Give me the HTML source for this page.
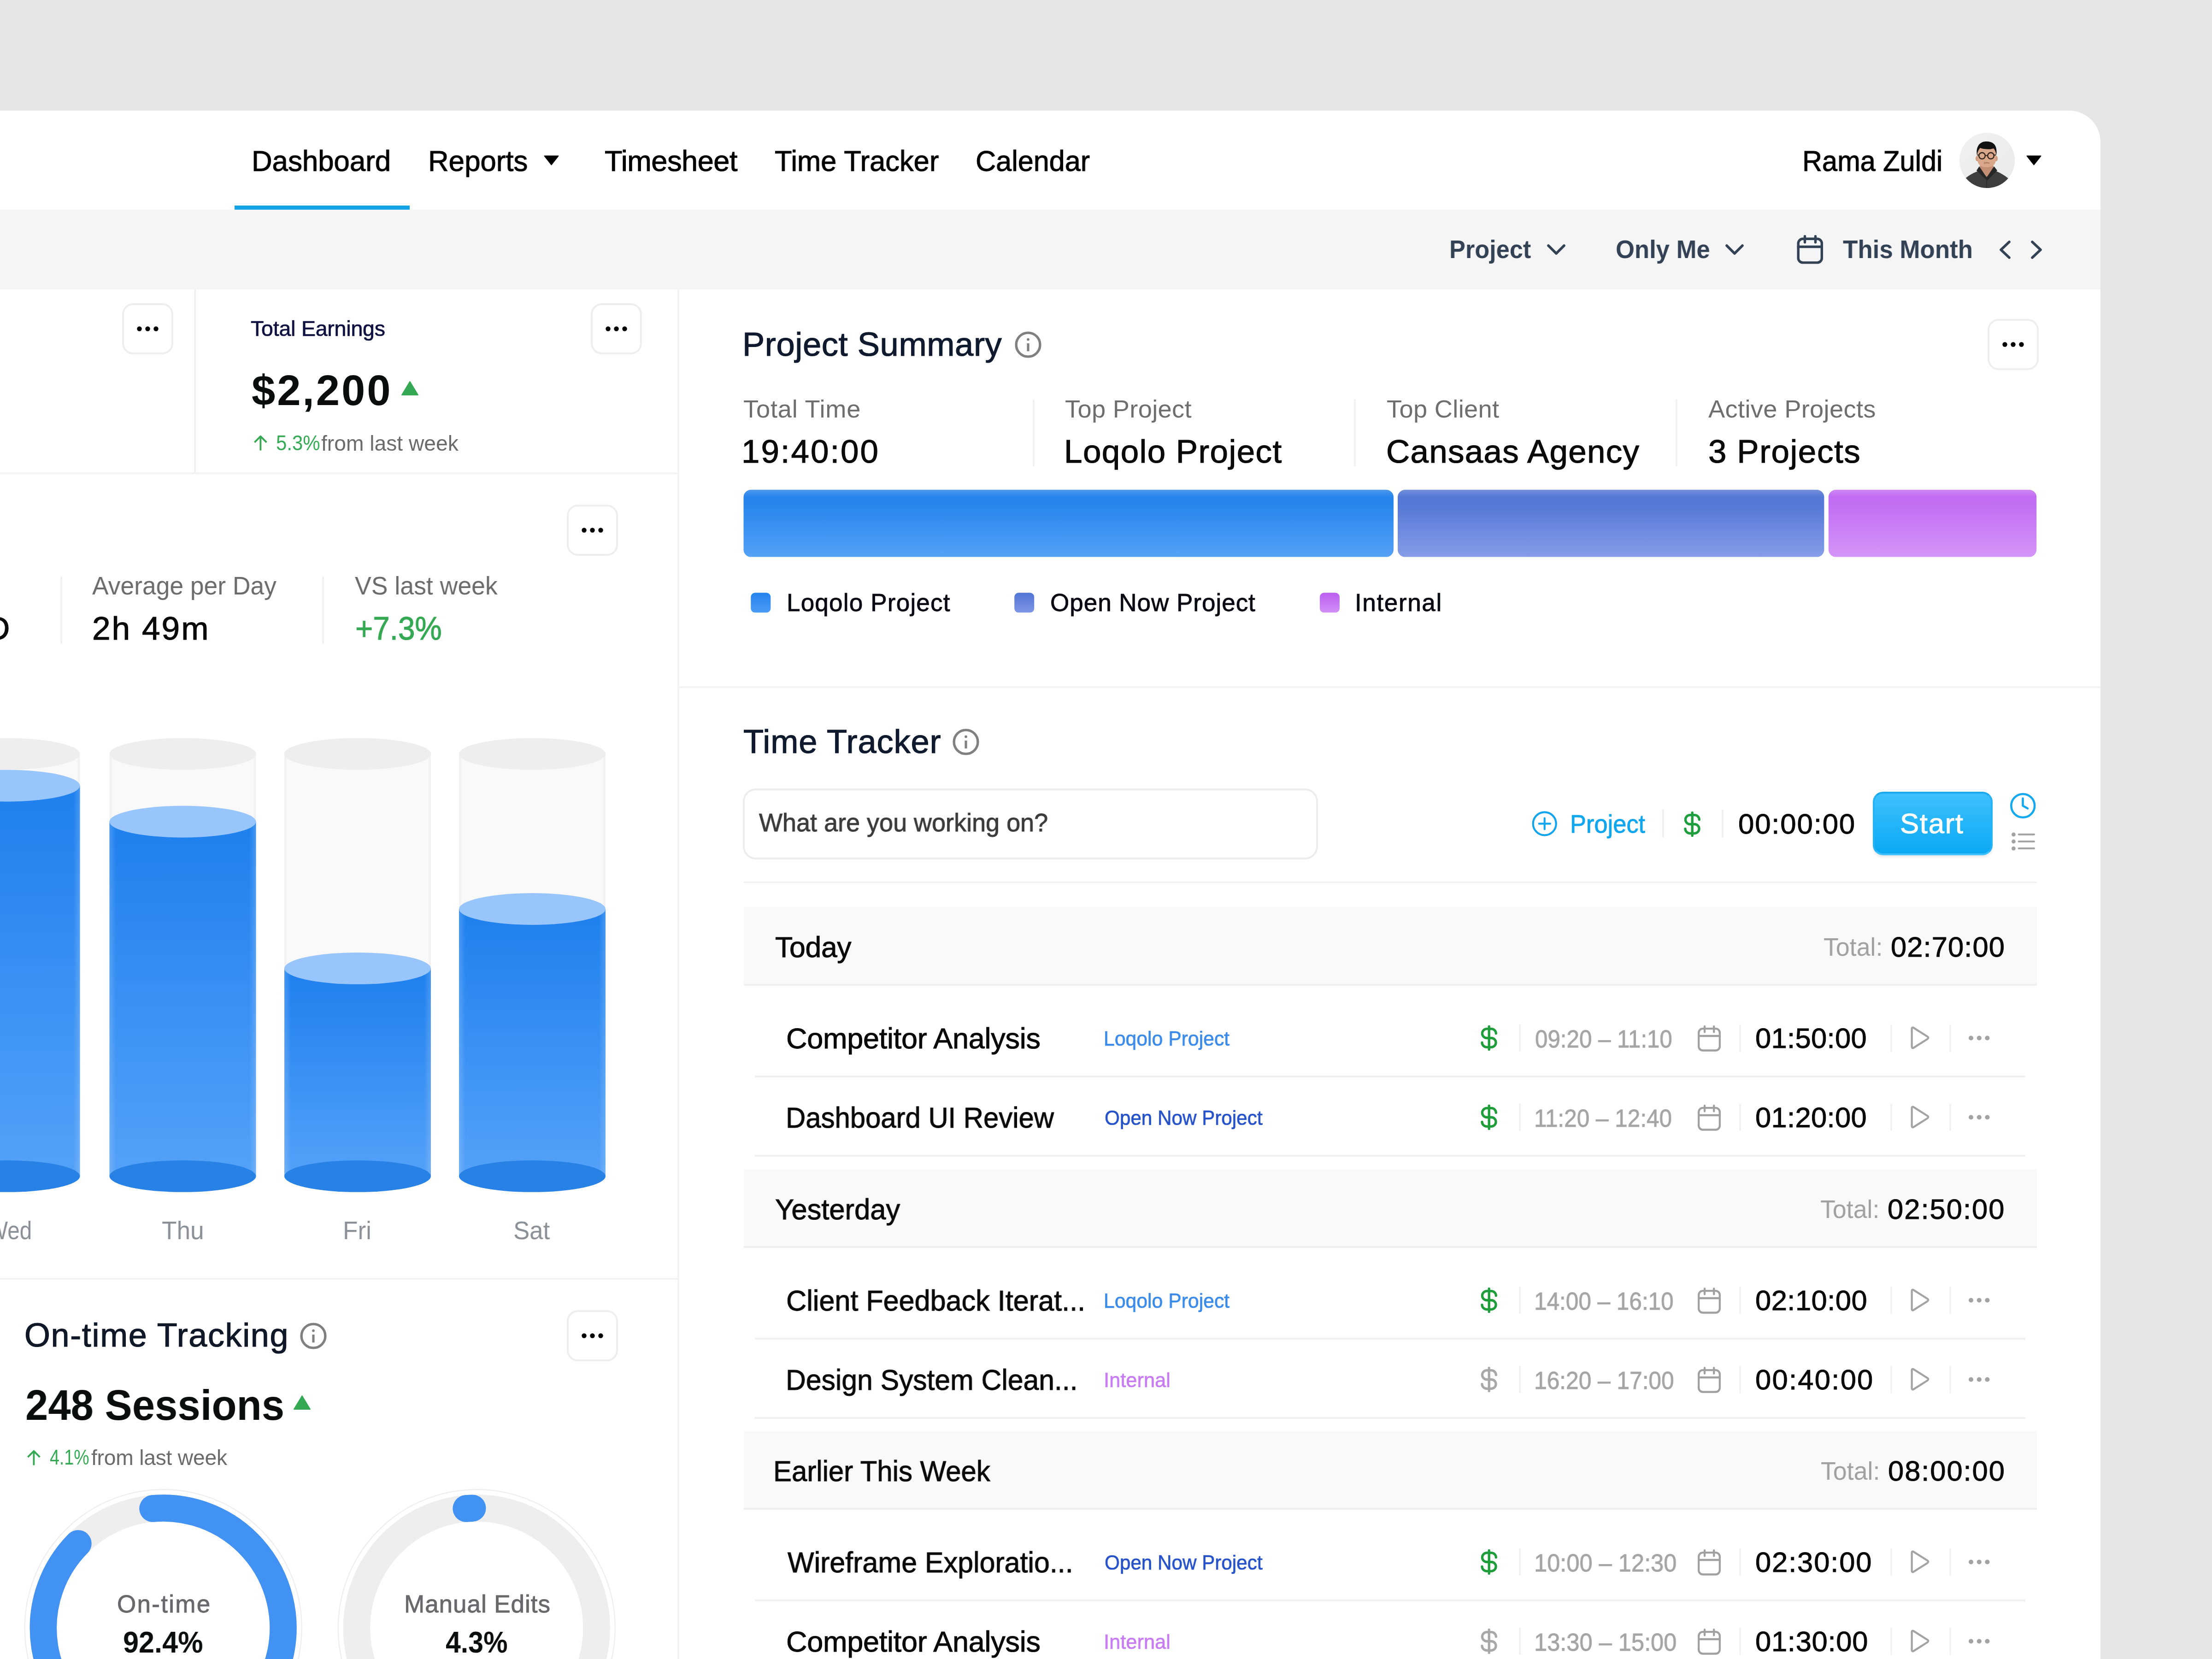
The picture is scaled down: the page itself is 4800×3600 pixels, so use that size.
<!DOCTYPE html><html><head><meta charset="utf-8"><style>
html,body{margin:0;padding:0}
body{width:4800px;height:3600px;background:#e6e6e6;overflow:hidden;position:relative;font-family:"Liberation Sans",sans-serif}
body>div{position:absolute}
.t{position:absolute;line-height:0;white-space:pre;will-change:transform}
</style></head><body>
<div style="left:-100px;top:240px;width:4657.5px;height:3360px;background:#fff;border-top-right-radius:68px"></div>
<div style="left:0.0px;top:455.0px;width:4557.5px;height:173.0px;background:#f5f5f5;"></div>
<div style="left:508.6px;top:446.0px;width:380.2px;height:9.0px;background:#14a3e6;"></div>
<div style="left:421.0px;top:628.0px;width:4.0px;height:397.0px;background:#f2f2f2;"></div>
<div style="left:0.0px;top:1025.0px;width:1470.0px;height:4.0px;background:#f3f3f3;"></div>
<div style="left:1470.0px;top:628.0px;width:4.0px;height:2972.0px;background:#f3f3f3;"></div>
<div style="left:0.0px;top:2773.0px;width:1470.0px;height:4.0px;background:#f3f3f3;"></div>
<div style="left:1474.0px;top:1489.0px;width:3083.5px;height:4.0px;background:#f3f3f3;"></div>
<div class="t" style="left:546.4px;top:348.5px;font-size:63.08px;font-weight:normal;color:#000;letter-spacing:0.00px;transform:scaleX(0.9789);transform-origin:0 0;will-change:transform;-webkit-text-stroke:1.01px #000;">Dashboard</div>
<div class="t" style="left:928.5px;top:348.5px;font-size:63.08px;font-weight:normal;color:#000;letter-spacing:0.00px;transform:scaleX(0.9797);transform-origin:0 0;will-change:transform;-webkit-text-stroke:1.01px #000;">Reports</div>
<svg style="position:absolute;left:1180.0px;top:337.0px;overflow:visible;" width="33" height="22" viewBox="0 0 33 22"><path d="M1.5 1.5 L31.5 1.5 L16.5 20.5 Z" fill="#000" stroke="#000" stroke-width="2" stroke-linejoin="round"/></svg>
<div class="t" style="left:1312.1px;top:348.5px;font-size:63.08px;font-weight:normal;color:#000;letter-spacing:-0.46px;-webkit-text-stroke:1.01px #000;">Timesheet</div>
<div class="t" style="left:1680.6px;top:348.5px;font-size:63.08px;font-weight:normal;color:#000;letter-spacing:0.00px;transform:scaleX(0.9743);transform-origin:0 0;will-change:transform;-webkit-text-stroke:1.01px #000;">Time Tracker</div>
<div class="t" style="left:2116.9px;top:348.5px;font-size:63.08px;font-weight:normal;color:#000;letter-spacing:0.00px;transform:scaleX(0.9688);transform-origin:0 0;will-change:transform;-webkit-text-stroke:1.01px #000;">Calendar</div>
<div class="t" style="left:3911.2px;top:348.5px;font-size:63.08px;font-weight:normal;color:#000;letter-spacing:0.00px;transform:scaleX(0.9430);transform-origin:0 0;will-change:transform;-webkit-text-stroke:1.01px #000;">Rama Zuldi</div>
<svg style="position:absolute;left:4397.0px;top:337.0px;overflow:visible;" width="33" height="22" viewBox="0 0 33 22"><path d="M1.5 1.5 L31.5 1.5 L16.5 20.5 Z" fill="#000" stroke="#000" stroke-width="2" stroke-linejoin="round"/></svg>
<svg style="position:absolute;left:4252.0px;top:288.0px;overflow:visible;" width="120" height="120" viewBox="0 0 120 120">
<defs><clipPath id="avc"><circle cx="60" cy="60" r="60"/></clipPath>
<linearGradient id="avbg" x1="0" y1="0" x2="1" y2="1"><stop offset="0" stop-color="#f0f1f0"/><stop offset="1" stop-color="#e7ebea"/></linearGradient></defs>
<g clip-path="url(#avc)">
<rect width="120" height="120" fill="url(#avbg)"/>
<path d="M2 112 C10 98 26 88 44 82 L76 82 C92 88 108 98 118 112 L120 125 L0 125 Z" fill="#3c3f3d"/>
<path d="M45 62 L73 62 L74 80 L59 96 L44 80 Z" fill="#c48e74"/>
<path d="M43 73 L59 97 L75 73 L82 82 L60 104 L37 82 Z" fill="#252826"/>
<path d="M59 100 L59 125" stroke="#2a2c2b" stroke-width="1.5"/>
<ellipse cx="38.5" cy="56" rx="3.5" ry="6" fill="#cf9a7e"/>
<ellipse cx="79.5" cy="56" rx="3.5" ry="6" fill="#cf9a7e"/>
<path d="M39 46 C39 34 47 29 59 29 C71 29 79 34 79 46 L79 58 C79 70 70 75 59 75 C48 75 39 70 39 58 Z" fill="#d9a78a"/>
<path d="M38 50 C35 30 44 19 58 19 C74 19 83 27 80 50 C79 42 77 37 74 34 C66 37 52 36 45 33 C41 37 39 43 38 50 Z" fill="#121212"/>
<circle cx="49" cy="50" r="6.8" fill="none" stroke="#32251d" stroke-width="2.4"/>
<circle cx="68" cy="50" r="6.8" fill="none" stroke="#32251d" stroke-width="2.4"/>
<path d="M55.8 49.5 L61.2 49.5 M42.2 49 L39 48 M74.8 49 L79 48" stroke="#32251d" stroke-width="2"/>
<path d="M53 66 Q59 64.5 65 66" stroke="#a86f5a" stroke-width="2" fill="none"/>
</g></svg>
<div class="t" style="left:3144.8px;top:542.3px;font-size:54.65px;font-weight:bold;color:#334155;letter-spacing:0.00px;transform:scaleX(0.9569);transform-origin:0 0;will-change:transform;">Project</div>
<div class="t" style="left:3506.2px;top:542.3px;font-size:54.65px;font-weight:bold;color:#334155;letter-spacing:0.00px;transform:scaleX(0.9626);transform-origin:0 0;will-change:transform;">Only Me</div>
<div class="t" style="left:3998.7px;top:542.3px;font-size:54.65px;font-weight:bold;color:#334155;letter-spacing:0.00px;transform:scaleX(0.9677);transform-origin:0 0;will-change:transform;">This Month</div>
<svg style="position:absolute;left:3357.0px;top:530.0px;overflow:visible;" width="40" height="23" viewBox="0 0 40 23"><path d="M3 3 L20 20 L37 3" fill="none" stroke="#334155" stroke-width="5.6" stroke-linecap="round" stroke-linejoin="round"/></svg>
<svg style="position:absolute;left:3744.0px;top:530.0px;overflow:visible;" width="40" height="23" viewBox="0 0 40 23"><path d="M3 3 L20 20 L37 3" fill="none" stroke="#334155" stroke-width="5.6" stroke-linecap="round" stroke-linejoin="round"/></svg>
<svg style="position:absolute;left:3899.0px;top:510.0px;overflow:visible;" width="58" height="63" viewBox="0 0 58 63"><rect x="3.2" y="8.3" width="51.1" height="51.6" rx="10" fill="none" stroke="#334155" stroke-width="5.4"/><path d="M17.5 2.7 V15.8 M40.5 2.7 V15.8 M3.2 25.5 H54.3" stroke="#334155" stroke-width="5.4" stroke-linecap="round"/></svg>
<svg style="position:absolute;left:4339.0px;top:522.0px;overflow:visible;" width="24" height="40" viewBox="0 0 24 40"><path d="M21 3 L3 20 L21 37" fill="none" stroke="#334155" stroke-width="5.6" stroke-linecap="round" stroke-linejoin="round"/></svg>
<svg style="position:absolute;left:4407.0px;top:522.0px;overflow:visible;" width="24" height="40" viewBox="0 0 24 40"><path d="M3 3 L21 20 L3 37" fill="none" stroke="#334155" stroke-width="5.6" stroke-linecap="round" stroke-linejoin="round"/></svg>
<div style="left:265.0px;top:658.0px;width:111px;height:111px;box-sizing:border-box;border:4px solid #eeeeee;border-radius:24px;background:#fff"></div>
<svg style="position:absolute;left:265.0px;top:658.0px;overflow:visible;" width="111" height="111" viewBox="0 0 111 111"><circle cx="37.5" cy="55.5" r="5.2" fill="#000"/><circle cx="55.5" cy="55.5" r="5.2" fill="#000"/><circle cx="73.5" cy="55.5" r="5.2" fill="#000"/></svg>
<div style="left:1282.0px;top:658.0px;width:111px;height:111px;box-sizing:border-box;border:4px solid #eeeeee;border-radius:24px;background:#fff"></div>
<svg style="position:absolute;left:1282.0px;top:658.0px;overflow:visible;" width="111" height="111" viewBox="0 0 111 111"><circle cx="37.5" cy="55.5" r="5.2" fill="#000"/><circle cx="55.5" cy="55.5" r="5.2" fill="#000"/><circle cx="73.5" cy="55.5" r="5.2" fill="#000"/></svg>
<div class="t" style="left:544.3px;top:713.1px;font-size:46.51px;font-weight:normal;color:#0f1140;letter-spacing:-0.21px;-webkit-text-stroke:0.74px #0f1140;">Total Earnings</div>
<div class="t" style="left:545.5px;top:847.3px;font-size:92.30px;font-weight:bold;color:#0a0f0d;letter-spacing:3.85px;">$2,200</div>
<svg style="position:absolute;left:870.0px;top:826.0px;overflow:visible;" width="39" height="33" viewBox="0 0 39 33"><path d="M19.5 2 L37 31 L2 31 Z" fill="#34a853" stroke="#34a853" stroke-width="2" stroke-linejoin="round"/></svg>
<svg style="position:absolute;left:549.0px;top:943.8px;overflow:visible;" width="32" height="36" viewBox="0 0 32 36"><path d="M16.4 33.5 V4 M3.4 15.8 L16.4 2.8 L29.4 15.8" fill="none" stroke="#34a853" stroke-width="3.8" stroke-linecap="butt" stroke-linejoin="round"/></svg>
<div class="t" style="left:598.8px;top:961.9px;font-size:45.35px;font-weight:normal;color:#34a853;letter-spacing:0.00px;transform:scaleX(0.9251);transform-origin:0 0;will-change:transform;">5.3%</div>
<div class="t" style="left:696.8px;top:961.6px;font-size:46.22px;font-weight:normal;color:#6b6b6b;letter-spacing:-0.01px;">from last week</div>
<div style="left:1229.5px;top:1094.5px;width:111px;height:111px;box-sizing:border-box;border:4px solid #eeeeee;border-radius:24px;background:#fff"></div>
<svg style="position:absolute;left:1229.5px;top:1094.5px;overflow:visible;" width="111" height="111" viewBox="0 0 111 111"><circle cx="37.5" cy="55.5" r="5.2" fill="#000"/><circle cx="55.5" cy="55.5" r="5.2" fill="#000"/><circle cx="73.5" cy="55.5" r="5.2" fill="#000"/></svg>
<div style="left:131.0px;top:1251.0px;width:4.0px;height:146.0px;background:#f2f2f2;"></div>
<div style="left:699.0px;top:1251.0px;width:4.0px;height:146.0px;background:#f2f2f2;"></div>
<div class="t" style="left:-29.9px;top:1363.8px;font-size:71.22px;font-weight:normal;color:#0a0a0a;letter-spacing:0.00px;-webkit-text-stroke:1.14px #0a0a0a;">D</div>
<div class="t" style="left:200.3px;top:1271.0px;font-size:54.80px;font-weight:normal;color:#6b6b6b;letter-spacing:0.00px;transform:scaleX(0.9749);transform-origin:0 0;will-change:transform;">Average per Day</div>
<div class="t" style="left:200.1px;top:1363.8px;font-size:71.22px;font-weight:normal;color:#0a0a0a;letter-spacing:2.99px;-webkit-text-stroke:1.14px #0a0a0a;">2h 49m</div>
<div class="t" style="left:769.7px;top:1271.0px;font-size:54.80px;font-weight:normal;color:#6b6b6b;letter-spacing:0.00px;transform:scaleX(0.9780);transform-origin:0 0;will-change:transform;">VS last week</div>
<div class="t" style="left:771.2px;top:1363.8px;font-size:71.22px;font-weight:normal;color:#34a853;letter-spacing:0.00px;transform:scaleX(0.9204);transform-origin:0 0;will-change:transform;-webkit-text-stroke:1.14px #34a853;">+7.3%</div>
<svg style="position:absolute;left:0.0px;top:0.0px;overflow:visible;" width="1470" height="2700" viewBox="0 0 1470 2700"><defs>
<linearGradient id="fillg" x1="0" y1="0" x2="0" y2="1"><stop offset="0" stop-color="#1e80ee"/><stop offset="1" stop-color="#54a1f8"/></linearGradient>
<linearGradient id="sideg" x1="0" y1="0" x2="1" y2="0"><stop offset="0" stop-color="#ffffff" stop-opacity="0.17"/><stop offset="0.045" stop-color="#ffffff" stop-opacity="0"/><stop offset="0.955" stop-color="#ffffff" stop-opacity="0"/><stop offset="1" stop-color="#ffffff" stop-opacity="0.17"/></linearGradient>
<linearGradient id="bgside" x1="0" y1="0" x2="1" y2="0"><stop offset="0" stop-color="#f2f2f2"/><stop offset="0.012" stop-color="#f2f2f2"/><stop offset="0.02" stop-color="#f9f9f9"/><stop offset="0.98" stop-color="#f9f9f9"/><stop offset="0.988" stop-color="#f2f2f2"/><stop offset="1" stop-color="#f2f2f2"/></linearGradient>
</defs><rect x="-144.5" y="1636" width="318" height="916.4000000000001" fill="url(#bgside)"/><ellipse cx="14.5" cy="1636" rx="159" ry="34.4" fill="#eeeeee"/><rect x="-144.5" y="1705" width="318" height="847.4000000000001" fill="url(#fillg)"/><rect x="-144.5" y="1705" width="318" height="847.4000000000001" fill="url(#sideg)"/><ellipse cx="14.5" cy="2552.4" rx="159" ry="34.4" fill="#2882e6"/><ellipse cx="14.5" cy="1705" rx="159" ry="34.4" fill="#98c5fb"/><rect x="237.5" y="1636" width="318" height="916.4000000000001" fill="url(#bgside)"/><ellipse cx="396.5" cy="1636" rx="159" ry="34.4" fill="#eeeeee"/><rect x="237.5" y="1783" width="318" height="769.4000000000001" fill="url(#fillg)"/><rect x="237.5" y="1783" width="318" height="769.4000000000001" fill="url(#sideg)"/><ellipse cx="396.5" cy="2552.4" rx="159" ry="34.4" fill="#2882e6"/><ellipse cx="396.5" cy="1783" rx="159" ry="34.4" fill="#98c5fb"/><rect x="617" y="1636" width="318" height="916.4000000000001" fill="url(#bgside)"/><ellipse cx="776" cy="1636" rx="159" ry="34.4" fill="#eeeeee"/><rect x="617" y="2101.4" width="318" height="451.0" fill="url(#fillg)"/><rect x="617" y="2101.4" width="318" height="451.0" fill="url(#sideg)"/><ellipse cx="776" cy="2552.4" rx="159" ry="34.4" fill="#2882e6"/><ellipse cx="776" cy="2101.4" rx="159" ry="34.4" fill="#98c5fb"/><rect x="996" y="1636" width="318" height="916.4000000000001" fill="url(#bgside)"/><ellipse cx="1155" cy="1636" rx="159" ry="34.4" fill="#eeeeee"/><rect x="996" y="1972.5" width="318" height="579.9000000000001" fill="url(#fillg)"/><rect x="996" y="1972.5" width="318" height="579.9000000000001" fill="url(#sideg)"/><ellipse cx="1155" cy="2552.4" rx="159" ry="34.4" fill="#2882e6"/><ellipse cx="1155" cy="1972.5" rx="159" ry="34.4" fill="#98c5fb"/></svg>
<div class="t" style="left:-27.8px;top:2669.8px;font-size:56.40px;font-weight:normal;color:#8b9096;letter-spacing:0.00px;transform:scaleX(0.8457);transform-origin:0 0;will-change:transform;">Wed</div>
<div class="t" style="left:351.4px;top:2669.8px;font-size:56.40px;font-weight:normal;color:#8b9096;letter-spacing:0.00px;transform:scaleX(0.9435);transform-origin:0 0;will-change:transform;">Thu</div>
<div class="t" style="left:743.6px;top:2669.8px;font-size:56.40px;font-weight:normal;color:#8b9096;letter-spacing:0.00px;transform:scaleX(0.9411);transform-origin:0 0;will-change:transform;">Fri</div>
<div class="t" style="left:1114.2px;top:2669.8px;font-size:56.40px;font-weight:normal;color:#8b9096;letter-spacing:0.00px;transform:scaleX(0.9359);transform-origin:0 0;will-change:transform;">Sat</div>
<div class="t" style="left:52.9px;top:2897.4px;font-size:71.95px;font-weight:normal;color:#101828;letter-spacing:1.65px;-webkit-text-stroke:1.15px #101828;">On-time Tracking</div>
<svg style="position:absolute;left:650.0px;top:2868.7px;overflow:visible;" width="60" height="60" viewBox="0 0 60 60"><circle cx="30" cy="30" r="25.9" fill="none" stroke="#808080" stroke-width="5.4"/><circle cx="30" cy="18.6" r="2.9" fill="#808080"/><rect x="27.4" y="27" width="5.2" height="17.2" fill="#808080"/></svg>
<div style="left:1229.5px;top:2842.5px;width:111px;height:111px;box-sizing:border-box;border:4px solid #eeeeee;border-radius:24px;background:#fff"></div>
<svg style="position:absolute;left:1229.5px;top:2842.5px;overflow:visible;" width="111" height="111" viewBox="0 0 111 111"><circle cx="37.5" cy="55.5" r="5.2" fill="#000"/><circle cx="55.5" cy="55.5" r="5.2" fill="#000"/><circle cx="73.5" cy="55.5" r="5.2" fill="#000"/></svg>
<div class="t" style="left:54.5px;top:3048.8px;font-size:92.01px;font-weight:bold;color:#0a0f0d;letter-spacing:0.00px;transform:scaleX(0.9639);transform-origin:0 0;will-change:transform;">248 Sessions</div>
<svg style="position:absolute;left:636.0px;top:3027.0px;overflow:visible;" width="39" height="33" viewBox="0 0 39 33"><path d="M19.5 2 L37 31 L2 31 Z" fill="#34a853" stroke="#34a853" stroke-width="2" stroke-linejoin="round"/></svg>
<svg style="position:absolute;left:56.6px;top:3145.5px;overflow:visible;" width="32" height="36" viewBox="0 0 32 36"><path d="M16.4 33.5 V4 M3.4 15.8 L16.4 2.8 L29.4 15.8" fill="none" stroke="#34a853" stroke-width="3.8" stroke-linecap="butt" stroke-linejoin="round"/></svg>
<div class="t" style="left:107.7px;top:3163.3px;font-size:45.35px;font-weight:normal;color:#34a853;letter-spacing:0.00px;transform:scaleX(0.8285);transform-origin:0 0;will-change:transform;">4.1%</div>
<div class="t" style="left:197.8px;top:3163.0px;font-size:46.22px;font-weight:normal;color:#6b6b6b;letter-spacing:-0.22px;">from last week</div>
<svg style="position:absolute;left:0.0px;top:0.0px;overflow:visible;" width="1470" height="3600" viewBox="0 0 1470 3600"><circle cx="354.2" cy="3532.8" r="300.5" fill="none" stroke="#efefef" stroke-width="2.5"/><circle cx="354.2" cy="3532.8" r="260.3" fill="none" stroke="#eeeeee" stroke-width="58.5"/><path d="M331.51 3273.49 A260.3 260.3 0 1 1 169.50 3349.38" fill="none" stroke="#4192f3" stroke-width="58.5" stroke-linecap="round"/></svg>
<svg style="position:absolute;left:0.0px;top:0.0px;overflow:visible;" width="1470" height="3600" viewBox="0 0 1470 3600"><circle cx="1034.3" cy="3532.8" r="300.5" fill="none" stroke="#efefef" stroke-width="2.5"/><circle cx="1034.3" cy="3532.8" r="260.3" fill="none" stroke="#eeeeee" stroke-width="58.5"/><path d="M1011.61 3273.49 A260.3 260.3 0 0 1 1025.22 3272.66" fill="none" stroke="#4192f3" stroke-width="58.5" stroke-linecap="round"/></svg>
<div class="t" style="left:254.3px;top:3480.8px;font-size:53.05px;font-weight:normal;color:#69696d;letter-spacing:2.28px;-webkit-text-stroke:0.85px #69696d;">On-time</div>
<div class="t" style="left:266.6px;top:3563.7px;font-size:63.95px;font-weight:bold;color:#0a0f0d;letter-spacing:0.00px;transform:scaleX(0.9568);transform-origin:0 0;will-change:transform;">92.4%</div>
<div class="t" style="left:876.8px;top:3480.8px;font-size:53.05px;font-weight:normal;color:#69696d;letter-spacing:0.94px;-webkit-text-stroke:0.85px #69696d;">Manual Edits</div>
<div class="t" style="left:967.1px;top:3563.7px;font-size:63.95px;font-weight:bold;color:#0a0f0d;letter-spacing:0.00px;transform:scaleX(0.9225);transform-origin:0 0;will-change:transform;">4.3%</div>
<div class="t" style="left:1611.0px;top:746.9px;font-size:72.38px;font-weight:normal;color:#0f1a2e;letter-spacing:0.56px;-webkit-text-stroke:1.16px #0f1a2e;">Project Summary</div>
<svg style="position:absolute;left:2200.5px;top:718.2px;overflow:visible;" width="60" height="60" viewBox="0 0 60 60"><circle cx="30" cy="30" r="25.9" fill="none" stroke="#808080" stroke-width="5.4"/><circle cx="30" cy="18.6" r="2.9" fill="#808080"/><rect x="27.4" y="27" width="5.2" height="17.2" fill="#808080"/></svg>
<div style="left:4312.5px;top:692.0px;width:111px;height:111px;box-sizing:border-box;border:4px solid #eeeeee;border-radius:24px;background:#fff"></div>
<svg style="position:absolute;left:4312.5px;top:692.0px;overflow:visible;" width="111" height="111" viewBox="0 0 111 111"><circle cx="37.5" cy="55.5" r="5.2" fill="#000"/><circle cx="55.5" cy="55.5" r="5.2" fill="#000"/><circle cx="73.5" cy="55.5" r="5.2" fill="#000"/></svg>
<div class="t" style="left:1612.5px;top:887.2px;font-size:54.22px;font-weight:normal;color:#6e6e6e;letter-spacing:0.82px;">Total Time</div>
<div class="t" style="left:1608.7px;top:979.7px;font-size:70.93px;font-weight:normal;color:#0a0a0a;letter-spacing:2.98px;-webkit-text-stroke:1.13px #0a0a0a;">19:40:00</div>
<div class="t" style="left:2310.8px;top:887.2px;font-size:54.22px;font-weight:normal;color:#6e6e6e;letter-spacing:0.34px;">Top Project</div>
<div class="t" style="left:2309.1px;top:979.7px;font-size:70.93px;font-weight:normal;color:#0a0a0a;letter-spacing:1.44px;-webkit-text-stroke:1.13px #0a0a0a;">Loqolo Project</div>
<div class="t" style="left:3008.8px;top:887.2px;font-size:54.22px;font-weight:normal;color:#6e6e6e;letter-spacing:0.34px;">Top Client</div>
<div class="t" style="left:3007.5px;top:979.7px;font-size:70.93px;font-weight:normal;color:#0a0a0a;letter-spacing:1.28px;-webkit-text-stroke:1.13px #0a0a0a;">Cansaas Agency</div>
<div class="t" style="left:3706.6px;top:887.2px;font-size:54.22px;font-weight:normal;color:#6e6e6e;letter-spacing:0.35px;">Active Projects</div>
<div class="t" style="left:3706.6px;top:979.7px;font-size:70.93px;font-weight:normal;color:#0a0a0a;letter-spacing:1.60px;-webkit-text-stroke:1.13px #0a0a0a;">3 Projects</div>
<div style="left:2240.5px;top:867.0px;width:4.0px;height:145.0px;background:#f2f2f2;"></div>
<div style="left:2937.5px;top:867.0px;width:4.0px;height:145.0px;background:#f2f2f2;"></div>
<div style="left:3636.0px;top:867.0px;width:4.0px;height:145.0px;background:#f2f2f2;"></div>
<svg style="position:absolute;left:0.0px;top:0.0px;overflow:visible;" width="4600" height="1300" viewBox="0 0 4600 1300"><defs>
<linearGradient id="b1" x1="0" y1="0" x2="0" y2="1"><stop offset="0" stop-color="#4e98ec"/><stop offset="0.1" stop-color="#2886ec"/><stop offset="0.22" stop-color="#2786ec"/><stop offset="1" stop-color="#55a1f7"/></linearGradient>
<linearGradient id="b2" x1="0" y1="0" x2="0" y2="1"><stop offset="0" stop-color="#7490da"/><stop offset="0.1" stop-color="#5679d6"/><stop offset="0.22" stop-color="#5478d6"/><stop offset="1" stop-color="#869de8"/></linearGradient>
<linearGradient id="b3" x1="0" y1="0" x2="0" y2="1"><stop offset="0" stop-color="#cf88f4"/><stop offset="0.1" stop-color="#c06cf2"/><stop offset="0.22" stop-color="#c06ef2"/><stop offset="1" stop-color="#d595f8"/></linearGradient>
</defs><rect x="1613.5" y="1062.7" width="1410.5" height="145.9" rx="16" fill="url(#b1)"/><rect x="3033" y="1062.7" width="925.4" height="145.9" rx="16" fill="url(#b2)"/><rect x="3967.8" y="1062.7" width="451.4" height="145.9" rx="16" fill="url(#b3)"/></svg>
<svg style="position:absolute;left:0.0px;top:0.0px;overflow:visible;" width="4600" height="1400" viewBox="0 0 4600 1400"><defs>
<linearGradient id="l1" x1="0" y1="0" x2="0" y2="1"><stop offset="0" stop-color="#2483ee"/><stop offset="1" stop-color="#4c9bf6"/></linearGradient>
<linearGradient id="l2" x1="0" y1="0" x2="0" y2="1"><stop offset="0" stop-color="#5174d4"/><stop offset="1" stop-color="#7f97e4"/></linearGradient>
<linearGradient id="l3" x1="0" y1="0" x2="0" y2="1"><stop offset="0" stop-color="#bb5ef0"/><stop offset="1" stop-color="#d18ff6"/></linearGradient>
</defs><rect x="1629.3" y="1286.3" width="43" height="43" rx="9" fill="url(#l1)"/><rect x="2201.2" y="1286.3" width="43" height="43" rx="9" fill="url(#l2)"/><rect x="2863.9" y="1286.3" width="43" height="43" rx="9" fill="url(#l3)"/></svg>
<div class="t" style="left:1706.6px;top:1307.5px;font-size:53.05px;font-weight:normal;color:#0a0a14;letter-spacing:1.18px;-webkit-text-stroke:0.85px #0a0a14;">Loqolo Project</div>
<div class="t" style="left:2278.5px;top:1307.5px;font-size:53.05px;font-weight:normal;color:#0a0a14;letter-spacing:0.96px;-webkit-text-stroke:0.85px #0a0a14;">Open Now Project</div>
<div class="t" style="left:2940.0px;top:1307.5px;font-size:53.05px;font-weight:normal;color:#0a0a14;letter-spacing:1.62px;-webkit-text-stroke:0.85px #0a0a14;">Internal</div>
<div class="t" style="left:1613.4px;top:1608.7px;font-size:72.24px;font-weight:normal;color:#0f1a2e;letter-spacing:0.90px;-webkit-text-stroke:1.16px #0f1a2e;">Time Tracker</div>
<svg style="position:absolute;left:2065.5px;top:1580.0px;overflow:visible;" width="60" height="60" viewBox="0 0 60 60"><circle cx="30" cy="30" r="25.9" fill="none" stroke="#808080" stroke-width="5.4"/><circle cx="30" cy="18.6" r="2.9" fill="#808080"/><rect x="27.4" y="27" width="5.2" height="17.2" fill="#808080"/></svg>
<div style="left:1612.3px;top:1710.5px;width:1247.5px;height:154px;box-sizing:border-box;border:4px solid #ececec;border-radius:28px;background:#fff"></div>
<div class="t" style="left:1647.1px;top:1785.1px;font-size:55.96px;font-weight:normal;color:#3b3b3b;letter-spacing:0.00px;transform:scaleX(0.9647);transform-origin:0 0;will-change:transform;-webkit-text-stroke:0.90px #3b3b3b;">What are you working on?</div>
<svg style="position:absolute;left:3324.0px;top:1760.0px;overflow:visible;" width="56" height="56" viewBox="0 0 56 56"><circle cx="27.7" cy="27.4" r="25" fill="none" stroke="#12a5ee" stroke-width="4.2"/><path d="M15.8 27.4 H39.9 M27.7 15.3 V39.3" stroke="#12a5ee" stroke-width="4.2" stroke-linecap="round"/></svg>
<div class="t" style="left:3407.3px;top:1787.9px;font-size:55.23px;font-weight:normal;color:#10a6ee;letter-spacing:0.00px;transform:scaleX(0.9488);transform-origin:0 0;will-change:transform;-webkit-text-stroke:0.88px #10a6ee;">Project</div>
<div style="left:3607.3px;top:1757.0px;width:4.0px;height:60.0px;background:#f0f0f0;"></div>
<svg style="position:absolute;left:3653.2px;top:1760.5px;overflow:visible;" width="38" height="55" viewBox="0 0 38 55"><path d="M34.3 17.6 A10 10 0 0 0 24.3 7.6 H14.3 A9.95 9.95 0 0 0 14.3 27.5 H24.1 A9.95 9.95 0 0 1 24.1 47.4 H14 A10 10 0 0 1 4 37.4 M19.2 2.4 V52.4" fill="none" stroke="#1e9e3e" stroke-width="5.3" stroke-linecap="round"/></svg>
<div style="left:3736.0px;top:1757.0px;width:4.0px;height:60.0px;background:#f0f0f0;"></div>
<div class="t" style="left:3771.9px;top:1787.9px;font-size:61.77px;font-weight:normal;color:#0a0a0a;letter-spacing:1.82px;-webkit-text-stroke:0.99px #0a0a0a;">00:00:00</div>
<div style="left:4063.8px;top:1718.2px;width:260.7px;height:137.4px;box-sizing:border-box;border:4px solid;border-color:#1aa9ee #26b2f6 #3fc0ff;border-radius:22px;background:linear-gradient(#3ec1ff,#0ba8f3);box-shadow:0 5px 4px rgba(0,0,0,0.07)"></div>
<div class="t" style="left:4123.4px;top:1787.2px;font-size:61.77px;font-weight:normal;color:#ffffff;letter-spacing:1.64px;-webkit-text-stroke:0.99px #ffffff;">Start</div>
<svg style="position:absolute;left:4360.0px;top:1719.0px;overflow:visible;" width="60" height="60" viewBox="0 0 60 60"><circle cx="29.7" cy="29.4" r="25.4" fill="none" stroke="#14a8ee" stroke-width="4.6"/><path d="M29.5 13.6 V29.4 L40 35.3" fill="none" stroke="#14a8ee" stroke-width="4.6" stroke-linecap="round" stroke-linejoin="round"/></svg>
<svg style="position:absolute;left:4360.0px;top:1800.0px;overflow:visible;" width="60" height="50" viewBox="0 0 60 50"><circle cx="9.4" cy="10.8" r="4.4" fill="#a3a3a3"/><path d="M20.7 10.8 H54" stroke="#a3a3a3" stroke-width="4" stroke-linecap="round"/><circle cx="9.4" cy="26" r="4.4" fill="#a3a3a3"/><path d="M20.7 26 H54" stroke="#a3a3a3" stroke-width="4" stroke-linecap="round"/><circle cx="9.4" cy="41.1" r="4.4" fill="#a3a3a3"/><path d="M20.7 41.1 H54" stroke="#a3a3a3" stroke-width="4" stroke-linecap="round"/></svg>
<div style="left:1613.7px;top:1912.5px;width:2805.9px;height:3.5px;background:#f0f0f0;"></div>
<div style="left:1613.7px;top:1968.0px;width:2805.9px;height:167.0px;background:#f9f9f9;"></div>
<div style="left:1613.7px;top:2135.0px;width:2805.9px;height:4.0px;background:#efefef;"></div>
<div class="t" style="left:1681.6px;top:2055.4px;font-size:62.50px;font-weight:normal;color:#0a0a0a;letter-spacing:-0.29px;-webkit-text-stroke:1.00px #0a0a0a;">Today</div>
<div class="t" style="left:3957.0px;top:2055.1px;font-size:55.23px;font-weight:normal;color:#a0a0a0;letter-spacing:0.00px;transform:scaleX(0.9722);transform-origin:0 0;will-change:transform;">Total:</div>
<div class="t" style="left:4102.7px;top:2055.2px;font-size:61.48px;font-weight:normal;color:#0a0a0a;letter-spacing:1.08px;-webkit-text-stroke:0.98px #0a0a0a;">02:70:00</div>
<div class="t" style="left:1706.4px;top:2253.2px;font-size:62.94px;font-weight:normal;color:#0a0a0a;letter-spacing:-0.24px;-webkit-text-stroke:1.01px #0a0a0a;">Competitor Analysis</div>
<div class="t" style="left:2395.3px;top:2253.8px;font-size:44.33px;font-weight:normal;color:#3a8ae8;letter-spacing:0.00px;transform:scaleX(0.9635);transform-origin:0 0;will-change:transform;-webkit-text-stroke:0.71px #3a8ae8;">Loqolo Project</div>
<svg style="position:absolute;left:3212.0px;top:2225.0px;overflow:visible;" width="38" height="55" viewBox="0 0 38 55"><path d="M34.3 17.6 A10 10 0 0 0 24.3 7.6 H14.3 A9.95 9.95 0 0 0 14.3 27.5 H24.1 A9.95 9.95 0 0 1 24.1 47.4 H14 A10 10 0 0 1 4 37.4 M19.2 2.4 V52.4" fill="none" stroke="#1f9d3a" stroke-width="5.3" stroke-linecap="round"/></svg>
<div style="left:3296.0px;top:2223.0px;width:4.0px;height:58.6px;background:#f2f2f2;"></div>
<div style="left:3774.0px;top:2223.0px;width:4.0px;height:58.6px;background:#f2f2f2;"></div>
<div style="left:4102.0px;top:2223.0px;width:4.0px;height:58.6px;background:#f2f2f2;"></div>
<div style="left:4230.0px;top:2223.0px;width:4.0px;height:58.6px;background:#f2f2f2;"></div>
<div class="t" style="left:3331.0px;top:2253.6px;font-size:53.78px;font-weight:normal;color:#a5a5a5;letter-spacing:0.00px;transform:scaleX(0.9165);transform-origin:0 0;will-change:transform;-webkit-text-stroke:0.86px #a5a5a5;">09:20 – 11:10</div>
<svg style="position:absolute;left:3684.0px;top:2225.0px;overflow:visible;" width="50" height="56" viewBox="0 0 50 56"><rect x="2.15" y="7.2" width="45.7" height="47.3" rx="9" fill="none" stroke="#a0a0a0" stroke-width="4.3"/><path d="M15 2.2 V14.5 M35.2 2.2 V14.5 M2.2 23 H47.8" stroke="#a0a0a0" stroke-width="4.3" stroke-linecap="round"/></svg>
<div class="t" style="left:3808.5px;top:2253.2px;font-size:61.48px;font-weight:normal;color:#0a0a0a;letter-spacing:0.35px;-webkit-text-stroke:0.98px #0a0a0a;">01:50:00</div>
<svg style="position:absolute;left:4146.0px;top:2227.0px;overflow:visible;" width="41" height="51" viewBox="0 0 41 51"><path d="M2.6 5.8 Q2.6 0.9 6.9 3.6 L36.4 22.3 Q40 25 36.4 27.7 L6.9 46.4 Q2.6 49.1 2.6 44.2 Z" fill="none" stroke="#a3a3a3" stroke-width="4.3" stroke-linejoin="round"/></svg>
<svg style="position:absolute;left:4260.0px;top:2242.0px;overflow:visible;" width="70" height="21" viewBox="0 0 70 21"><circle cx="17" cy="10.5" r="5.1" fill="#a3a3a3"/><circle cx="34.8" cy="10.5" r="5.1" fill="#a3a3a3"/><circle cx="52.4" cy="10.5" r="5.1" fill="#a3a3a3"/></svg>
<div style="left:1638.0px;top:2334.0px;width:2757.0px;height:4.0px;background:#f0f0f0;"></div>
<div class="t" style="left:1704.6px;top:2425.2px;font-size:62.94px;font-weight:normal;color:#0a0a0a;letter-spacing:0.00px;transform:scaleX(0.9506);transform-origin:0 0;will-change:transform;-webkit-text-stroke:1.01px #0a0a0a;">Dashboard UI Review</div>
<div class="t" style="left:2396.8px;top:2425.8px;font-size:44.33px;font-weight:normal;color:#2551c8;letter-spacing:0.00px;transform:scaleX(0.9521);transform-origin:0 0;will-change:transform;-webkit-text-stroke:0.71px #2551c8;">Open Now Project</div>
<svg style="position:absolute;left:3212.0px;top:2397.0px;overflow:visible;" width="38" height="55" viewBox="0 0 38 55"><path d="M34.3 17.6 A10 10 0 0 0 24.3 7.6 H14.3 A9.95 9.95 0 0 0 14.3 27.5 H24.1 A9.95 9.95 0 0 1 24.1 47.4 H14 A10 10 0 0 1 4 37.4 M19.2 2.4 V52.4" fill="none" stroke="#1f9d3a" stroke-width="5.3" stroke-linecap="round"/></svg>
<div style="left:3296.0px;top:2395.0px;width:4.0px;height:58.6px;background:#f2f2f2;"></div>
<div style="left:3774.0px;top:2395.0px;width:4.0px;height:58.6px;background:#f2f2f2;"></div>
<div style="left:4102.0px;top:2395.0px;width:4.0px;height:58.6px;background:#f2f2f2;"></div>
<div style="left:4230.0px;top:2395.0px;width:4.0px;height:58.6px;background:#f2f2f2;"></div>
<div class="t" style="left:3329.3px;top:2425.6px;font-size:53.78px;font-weight:normal;color:#a5a5a5;letter-spacing:0.00px;transform:scaleX(0.9203);transform-origin:0 0;will-change:transform;-webkit-text-stroke:0.86px #a5a5a5;">11:20 – 12:40</div>
<svg style="position:absolute;left:3684.0px;top:2397.0px;overflow:visible;" width="50" height="56" viewBox="0 0 50 56"><rect x="2.15" y="7.2" width="45.7" height="47.3" rx="9" fill="none" stroke="#a0a0a0" stroke-width="4.3"/><path d="M15 2.2 V14.5 M35.2 2.2 V14.5 M2.2 23 H47.8" stroke="#a0a0a0" stroke-width="4.3" stroke-linecap="round"/></svg>
<div class="t" style="left:3808.5px;top:2425.2px;font-size:61.48px;font-weight:normal;color:#0a0a0a;letter-spacing:0.35px;-webkit-text-stroke:0.98px #0a0a0a;">01:20:00</div>
<svg style="position:absolute;left:4146.0px;top:2399.0px;overflow:visible;" width="41" height="51" viewBox="0 0 41 51"><path d="M2.6 5.8 Q2.6 0.9 6.9 3.6 L36.4 22.3 Q40 25 36.4 27.7 L6.9 46.4 Q2.6 49.1 2.6 44.2 Z" fill="none" stroke="#a3a3a3" stroke-width="4.3" stroke-linejoin="round"/></svg>
<svg style="position:absolute;left:4260.0px;top:2414.0px;overflow:visible;" width="70" height="21" viewBox="0 0 70 21"><circle cx="17" cy="10.5" r="5.1" fill="#a3a3a3"/><circle cx="34.8" cy="10.5" r="5.1" fill="#a3a3a3"/><circle cx="52.4" cy="10.5" r="5.1" fill="#a3a3a3"/></svg>
<div style="left:1638.0px;top:2506.0px;width:2757.0px;height:4.0px;background:#f0f0f0;"></div>
<div style="left:1613.7px;top:2537.0px;width:2805.9px;height:167.0px;background:#f9f9f9;"></div>
<div style="left:1613.7px;top:2704.0px;width:2805.9px;height:4.0px;background:#efefef;"></div>
<div class="t" style="left:1681.6px;top:2624.4px;font-size:62.50px;font-weight:normal;color:#0a0a0a;letter-spacing:0.00px;transform:scaleX(0.9834);transform-origin:0 0;will-change:transform;-webkit-text-stroke:1.00px #0a0a0a;">Yesterday</div>
<div class="t" style="left:3950.3px;top:2624.1px;font-size:55.23px;font-weight:normal;color:#a0a0a0;letter-spacing:0.00px;transform:scaleX(0.9722);transform-origin:0 0;will-change:transform;">Total:</div>
<div class="t" style="left:4096.0px;top:2624.2px;font-size:61.48px;font-weight:normal;color:#0a0a0a;letter-spacing:2.03px;-webkit-text-stroke:0.98px #0a0a0a;">02:50:00</div>
<div class="t" style="left:1706.4px;top:2822.2px;font-size:62.94px;font-weight:normal;color:#0a0a0a;letter-spacing:0.00px;transform:scaleX(0.9713);transform-origin:0 0;will-change:transform;-webkit-text-stroke:1.01px #0a0a0a;">Client Feedback Iterat...</div>
<div class="t" style="left:2395.3px;top:2822.8px;font-size:44.33px;font-weight:normal;color:#3a8ae8;letter-spacing:0.00px;transform:scaleX(0.9635);transform-origin:0 0;will-change:transform;-webkit-text-stroke:0.71px #3a8ae8;">Loqolo Project</div>
<svg style="position:absolute;left:3212.0px;top:2794.0px;overflow:visible;" width="38" height="55" viewBox="0 0 38 55"><path d="M34.3 17.6 A10 10 0 0 0 24.3 7.6 H14.3 A9.95 9.95 0 0 0 14.3 27.5 H24.1 A9.95 9.95 0 0 1 24.1 47.4 H14 A10 10 0 0 1 4 37.4 M19.2 2.4 V52.4" fill="none" stroke="#1f9d3a" stroke-width="5.3" stroke-linecap="round"/></svg>
<div style="left:3296.0px;top:2792.0px;width:4.0px;height:58.6px;background:#f2f2f2;"></div>
<div style="left:3774.0px;top:2792.0px;width:4.0px;height:58.6px;background:#f2f2f2;"></div>
<div style="left:4102.0px;top:2792.0px;width:4.0px;height:58.6px;background:#f2f2f2;"></div>
<div style="left:4230.0px;top:2792.0px;width:4.0px;height:58.6px;background:#f2f2f2;"></div>
<div class="t" style="left:3329.3px;top:2822.6px;font-size:53.78px;font-weight:normal;color:#a5a5a5;letter-spacing:0.00px;transform:scaleX(0.9200);transform-origin:0 0;will-change:transform;-webkit-text-stroke:0.86px #a5a5a5;">14:00 – 16:10</div>
<svg style="position:absolute;left:3684.0px;top:2794.0px;overflow:visible;" width="50" height="56" viewBox="0 0 50 56"><rect x="2.15" y="7.2" width="45.7" height="47.3" rx="9" fill="none" stroke="#a0a0a0" stroke-width="4.3"/><path d="M15 2.2 V14.5 M35.2 2.2 V14.5 M2.2 23 H47.8" stroke="#a0a0a0" stroke-width="4.3" stroke-linecap="round"/></svg>
<div class="t" style="left:3808.5px;top:2822.2px;font-size:61.48px;font-weight:normal;color:#0a0a0a;letter-spacing:0.49px;-webkit-text-stroke:0.98px #0a0a0a;">02:10:00</div>
<svg style="position:absolute;left:4146.0px;top:2796.0px;overflow:visible;" width="41" height="51" viewBox="0 0 41 51"><path d="M2.6 5.8 Q2.6 0.9 6.9 3.6 L36.4 22.3 Q40 25 36.4 27.7 L6.9 46.4 Q2.6 49.1 2.6 44.2 Z" fill="none" stroke="#a3a3a3" stroke-width="4.3" stroke-linejoin="round"/></svg>
<svg style="position:absolute;left:4260.0px;top:2811.0px;overflow:visible;" width="70" height="21" viewBox="0 0 70 21"><circle cx="17" cy="10.5" r="5.1" fill="#a3a3a3"/><circle cx="34.8" cy="10.5" r="5.1" fill="#a3a3a3"/><circle cx="52.4" cy="10.5" r="5.1" fill="#a3a3a3"/></svg>
<div style="left:1638.0px;top:2903.0px;width:2757.0px;height:4.0px;background:#f0f0f0;"></div>
<div class="t" style="left:1704.5px;top:2994.2px;font-size:62.94px;font-weight:normal;color:#0a0a0a;letter-spacing:0.00px;transform:scaleX(0.9631);transform-origin:0 0;will-change:transform;-webkit-text-stroke:1.01px #0a0a0a;">Design System Clean...</div>
<div class="t" style="left:2394.8px;top:2994.8px;font-size:44.33px;font-weight:normal;color:#c67cf0;letter-spacing:0.00px;transform:scaleX(0.9797);transform-origin:0 0;will-change:transform;-webkit-text-stroke:0.71px #c67cf0;">Internal</div>
<svg style="position:absolute;left:3212.0px;top:2966.0px;overflow:visible;" width="38" height="55" viewBox="0 0 38 55"><path d="M34.3 17.6 A10 10 0 0 0 24.3 7.6 H14.3 A9.95 9.95 0 0 0 14.3 27.5 H24.1 A9.95 9.95 0 0 1 24.1 47.4 H14 A10 10 0 0 1 4 37.4 M19.2 2.4 V52.4" fill="none" stroke="#a8a8a8" stroke-width="5.3" stroke-linecap="round"/></svg>
<div style="left:3296.0px;top:2964.0px;width:4.0px;height:58.6px;background:#f2f2f2;"></div>
<div style="left:3774.0px;top:2964.0px;width:4.0px;height:58.6px;background:#f2f2f2;"></div>
<div style="left:4102.0px;top:2964.0px;width:4.0px;height:58.6px;background:#f2f2f2;"></div>
<div style="left:4230.0px;top:2964.0px;width:4.0px;height:58.6px;background:#f2f2f2;"></div>
<div class="t" style="left:3329.3px;top:2994.6px;font-size:53.78px;font-weight:normal;color:#a5a5a5;letter-spacing:0.00px;transform:scaleX(0.9231);transform-origin:0 0;will-change:transform;-webkit-text-stroke:0.86px #a5a5a5;">16:20 – 17:00</div>
<svg style="position:absolute;left:3684.0px;top:2966.0px;overflow:visible;" width="50" height="56" viewBox="0 0 50 56"><rect x="2.15" y="7.2" width="45.7" height="47.3" rx="9" fill="none" stroke="#a0a0a0" stroke-width="4.3"/><path d="M15 2.2 V14.5 M35.2 2.2 V14.5 M2.2 23 H47.8" stroke="#a0a0a0" stroke-width="4.3" stroke-linecap="round"/></svg>
<div class="t" style="left:3808.5px;top:2994.2px;font-size:61.48px;font-weight:normal;color:#0a0a0a;letter-spacing:2.29px;-webkit-text-stroke:0.98px #0a0a0a;">00:40:00</div>
<svg style="position:absolute;left:4146.0px;top:2968.0px;overflow:visible;" width="41" height="51" viewBox="0 0 41 51"><path d="M2.6 5.8 Q2.6 0.9 6.9 3.6 L36.4 22.3 Q40 25 36.4 27.7 L6.9 46.4 Q2.6 49.1 2.6 44.2 Z" fill="none" stroke="#a3a3a3" stroke-width="4.3" stroke-linejoin="round"/></svg>
<svg style="position:absolute;left:4260.0px;top:2983.0px;overflow:visible;" width="70" height="21" viewBox="0 0 70 21"><circle cx="17" cy="10.5" r="5.1" fill="#a3a3a3"/><circle cx="34.8" cy="10.5" r="5.1" fill="#a3a3a3"/><circle cx="52.4" cy="10.5" r="5.1" fill="#a3a3a3"/></svg>
<div style="left:1638.0px;top:3075.0px;width:2757.0px;height:4.0px;background:#f0f0f0;"></div>
<div style="left:1613.7px;top:3105.0px;width:2805.9px;height:167.0px;background:#f9f9f9;"></div>
<div style="left:1613.7px;top:3272.0px;width:2805.9px;height:4.0px;background:#efefef;"></div>
<div class="t" style="left:1678.1px;top:3192.4px;font-size:62.50px;font-weight:normal;color:#0a0a0a;letter-spacing:0.00px;transform:scaleX(0.9587);transform-origin:0 0;will-change:transform;-webkit-text-stroke:1.00px #0a0a0a;">Earlier This Week</div>
<div class="t" style="left:3950.9px;top:3192.1px;font-size:55.23px;font-weight:normal;color:#a0a0a0;letter-spacing:0.00px;transform:scaleX(0.9722);transform-origin:0 0;will-change:transform;">Total:</div>
<div class="t" style="left:4096.6px;top:3192.2px;font-size:61.48px;font-weight:normal;color:#0a0a0a;letter-spacing:1.95px;-webkit-text-stroke:0.98px #0a0a0a;">08:00:00</div>
<div class="t" style="left:1709.2px;top:3390.2px;font-size:62.94px;font-weight:normal;color:#0a0a0a;letter-spacing:0.00px;transform:scaleX(0.9682);transform-origin:0 0;will-change:transform;-webkit-text-stroke:1.01px #0a0a0a;">Wireframe Exploratio...</div>
<div class="t" style="left:2396.8px;top:3390.8px;font-size:44.33px;font-weight:normal;color:#2551c8;letter-spacing:0.00px;transform:scaleX(0.9521);transform-origin:0 0;will-change:transform;-webkit-text-stroke:0.71px #2551c8;">Open Now Project</div>
<svg style="position:absolute;left:3212.0px;top:3362.0px;overflow:visible;" width="38" height="55" viewBox="0 0 38 55"><path d="M34.3 17.6 A10 10 0 0 0 24.3 7.6 H14.3 A9.95 9.95 0 0 0 14.3 27.5 H24.1 A9.95 9.95 0 0 1 24.1 47.4 H14 A10 10 0 0 1 4 37.4 M19.2 2.4 V52.4" fill="none" stroke="#1f9d3a" stroke-width="5.3" stroke-linecap="round"/></svg>
<div style="left:3296.0px;top:3360.0px;width:4.0px;height:58.6px;background:#f2f2f2;"></div>
<div style="left:3774.0px;top:3360.0px;width:4.0px;height:58.6px;background:#f2f2f2;"></div>
<div style="left:4102.0px;top:3360.0px;width:4.0px;height:58.6px;background:#f2f2f2;"></div>
<div style="left:4230.0px;top:3360.0px;width:4.0px;height:58.6px;background:#f2f2f2;"></div>
<div class="t" style="left:3329.2px;top:3390.6px;font-size:53.78px;font-weight:normal;color:#a5a5a5;letter-spacing:0.00px;transform:scaleX(0.9405);transform-origin:0 0;will-change:transform;-webkit-text-stroke:0.86px #a5a5a5;">10:00 – 12:30</div>
<svg style="position:absolute;left:3684.0px;top:3362.0px;overflow:visible;" width="50" height="56" viewBox="0 0 50 56"><rect x="2.15" y="7.2" width="45.7" height="47.3" rx="9" fill="none" stroke="#a0a0a0" stroke-width="4.3"/><path d="M15 2.2 V14.5 M35.2 2.2 V14.5 M2.2 23 H47.8" stroke="#a0a0a0" stroke-width="4.3" stroke-linecap="round"/></svg>
<div class="t" style="left:3808.5px;top:3390.2px;font-size:61.48px;font-weight:normal;color:#0a0a0a;letter-spacing:1.89px;-webkit-text-stroke:0.98px #0a0a0a;">02:30:00</div>
<svg style="position:absolute;left:4146.0px;top:3364.0px;overflow:visible;" width="41" height="51" viewBox="0 0 41 51"><path d="M2.6 5.8 Q2.6 0.9 6.9 3.6 L36.4 22.3 Q40 25 36.4 27.7 L6.9 46.4 Q2.6 49.1 2.6 44.2 Z" fill="none" stroke="#a3a3a3" stroke-width="4.3" stroke-linejoin="round"/></svg>
<svg style="position:absolute;left:4260.0px;top:3379.0px;overflow:visible;" width="70" height="21" viewBox="0 0 70 21"><circle cx="17" cy="10.5" r="5.1" fill="#a3a3a3"/><circle cx="34.8" cy="10.5" r="5.1" fill="#a3a3a3"/><circle cx="52.4" cy="10.5" r="5.1" fill="#a3a3a3"/></svg>
<div style="left:1638.0px;top:3471.0px;width:2757.0px;height:4.0px;background:#f0f0f0;"></div>
<div class="t" style="left:1706.4px;top:3562.2px;font-size:62.94px;font-weight:normal;color:#0a0a0a;letter-spacing:-0.24px;-webkit-text-stroke:1.01px #0a0a0a;">Competitor Analysis</div>
<div class="t" style="left:2394.8px;top:3562.8px;font-size:44.33px;font-weight:normal;color:#c67cf0;letter-spacing:0.00px;transform:scaleX(0.9797);transform-origin:0 0;will-change:transform;-webkit-text-stroke:0.71px #c67cf0;">Internal</div>
<svg style="position:absolute;left:3212.0px;top:3534.0px;overflow:visible;" width="38" height="55" viewBox="0 0 38 55"><path d="M34.3 17.6 A10 10 0 0 0 24.3 7.6 H14.3 A9.95 9.95 0 0 0 14.3 27.5 H24.1 A9.95 9.95 0 0 1 24.1 47.4 H14 A10 10 0 0 1 4 37.4 M19.2 2.4 V52.4" fill="none" stroke="#a8a8a8" stroke-width="5.3" stroke-linecap="round"/></svg>
<div style="left:3296.0px;top:3532.0px;width:4.0px;height:58.6px;background:#f2f2f2;"></div>
<div style="left:3774.0px;top:3532.0px;width:4.0px;height:58.6px;background:#f2f2f2;"></div>
<div style="left:4102.0px;top:3532.0px;width:4.0px;height:58.6px;background:#f2f2f2;"></div>
<div style="left:4230.0px;top:3532.0px;width:4.0px;height:58.6px;background:#f2f2f2;"></div>
<div class="t" style="left:3329.2px;top:3562.6px;font-size:53.78px;font-weight:normal;color:#a5a5a5;letter-spacing:0.00px;transform:scaleX(0.9405);transform-origin:0 0;will-change:transform;-webkit-text-stroke:0.86px #a5a5a5;">13:30 – 15:00</div>
<svg style="position:absolute;left:3684.0px;top:3534.0px;overflow:visible;" width="50" height="56" viewBox="0 0 50 56"><rect x="2.15" y="7.2" width="45.7" height="47.3" rx="9" fill="none" stroke="#a0a0a0" stroke-width="4.3"/><path d="M15 2.2 V14.5 M35.2 2.2 V14.5 M2.2 23 H47.8" stroke="#a0a0a0" stroke-width="4.3" stroke-linecap="round"/></svg>
<div class="t" style="left:3808.5px;top:3562.2px;font-size:61.48px;font-weight:normal;color:#0a0a0a;letter-spacing:0.73px;-webkit-text-stroke:0.98px #0a0a0a;">01:30:00</div>
<svg style="position:absolute;left:4146.0px;top:3536.0px;overflow:visible;" width="41" height="51" viewBox="0 0 41 51"><path d="M2.6 5.8 Q2.6 0.9 6.9 3.6 L36.4 22.3 Q40 25 36.4 27.7 L6.9 46.4 Q2.6 49.1 2.6 44.2 Z" fill="none" stroke="#a3a3a3" stroke-width="4.3" stroke-linejoin="round"/></svg>
<svg style="position:absolute;left:4260.0px;top:3551.0px;overflow:visible;" width="70" height="21" viewBox="0 0 70 21"><circle cx="17" cy="10.5" r="5.1" fill="#a3a3a3"/><circle cx="34.8" cy="10.5" r="5.1" fill="#a3a3a3"/><circle cx="52.4" cy="10.5" r="5.1" fill="#a3a3a3"/></svg>
</body></html>
